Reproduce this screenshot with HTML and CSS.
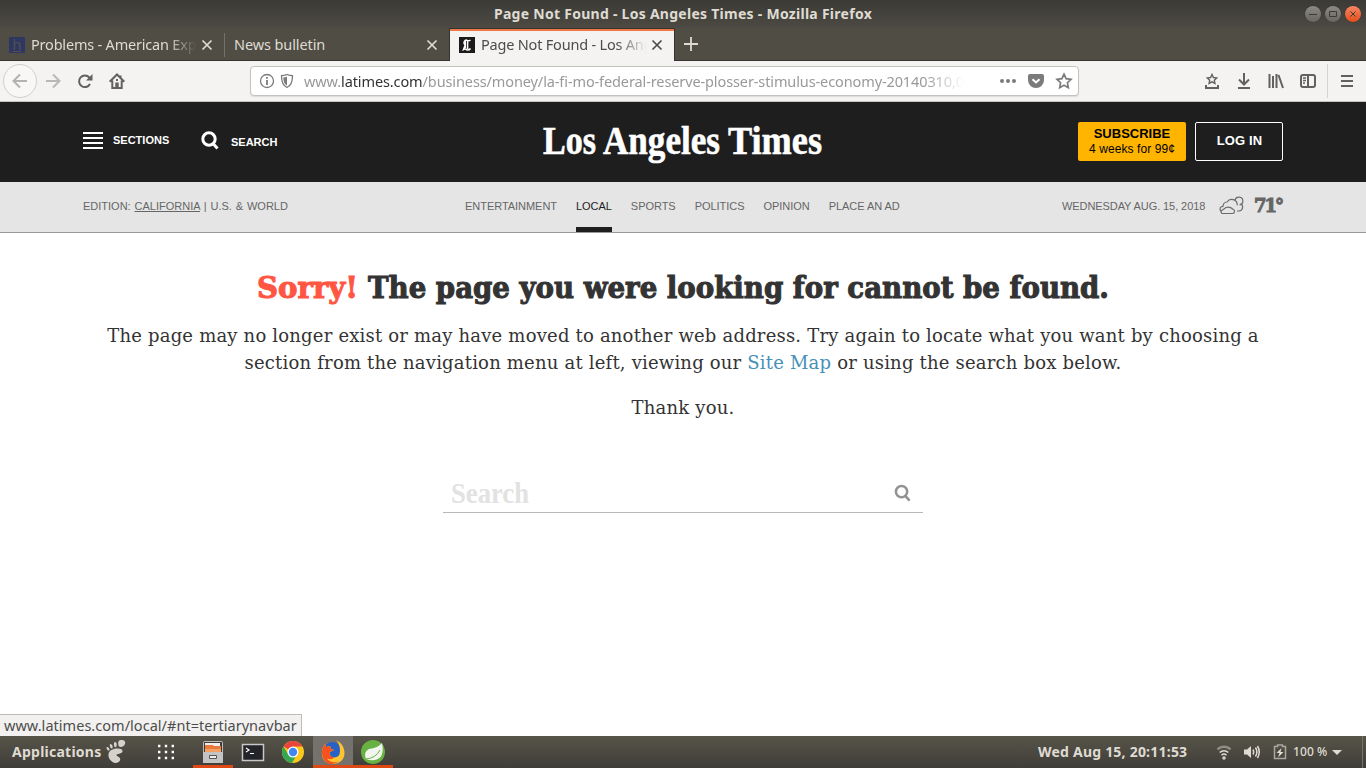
FILE: index.html
```html
<!DOCTYPE html>
<html lang="en">
<head>
<meta charset="utf-8">
<title>Page Not Found - Los Angeles Times</title>
<link rel="stylesheet" href="styles.css">
</head>
<body>
<div class="titlebar">
  <span class="window-title">Page Not Found - Los Angeles Times - Mozilla Firefox</span>
  <div class="window-buttons">
    <span class="win-btn"><svg viewBox="0 0 16 16"><path d="M4 8.500h8"/></svg></span>
    <span class="win-btn"><svg viewBox="0 0 16 16"><path d="M4.500 5.500h7v5h-7z"/></svg></span>
    <span class="win-btn win-close"><svg viewBox="0 0 16 16"><path d="M5.500 5.500l5 5m0-5l-5 5"/></svg></span>
  </div>
</div>
<div class="tabs">
  <div class="tab tab-first"><span class="favicon-h">h</span><span class="tab-label fade-dark">Problems - American Exp</span><svg class="close" viewBox="0 0 10 10"><path d="M.5.5l9 9m0-9l-9 9"/></svg></div>
  <div class="tab tab-second"><span class="tab-label">News bulletin</span><svg class="close" viewBox="0 0 10 10"><path d="M.5.5l9 9m0-9l-9 9"/></svg></div>
  <div class="tab tab-active"><svg class="favicon-la" viewBox="0 0 16 16"><path d="M0 0h16v16H0z" fill="#1d1a1b"/><path d="M11.500 3.200Q9 4.500 7.500 3 5 3.500 5 6.200L6.200 8 4.500 12.500Q6.500 11.500 8 13 10.500 13.200 11.500 11.500M5.200 3.400L6.300 4.500V11M8.600 4V12" fill="none" stroke="#fff" stroke-width="1.500"/></svg><span class="tab-label fade-light">Page Not Found - Los Ang</span><svg class="close" viewBox="0 0 10 10"><path d="M.5.5l9 9m0-9l-9 9"/></svg></div>
  <svg class="plus" viewBox="0 0 14 14"><path d="M7 0v14M0 7h14"/></svg>
</div>
<div class="toolbar">
  <span class="back"><svg viewBox="0 0 16 16"><path d="M15 8H2M8 1.500L1.500 8 8 14.500"/></svg></span>
  <svg class="icon forward" viewBox="0 0 16 16"><path d="M1 8h13M8 1.500L14.500 8 8 14.500"/></svg>
  <svg class="icon reload" viewBox="0 0 16 16"><path d="M12.300 4.500A5.800 5.800 0 1 0 13 11"/><path class="solid" d="M15.500 1v6.500H9z"/></svg>
  <svg class="icon home" viewBox="0 0 16 16"><path d="M.7 8.700L8 1.500l7.300 7.200M3.300 7.500v7.500h9.400V7.500M11.500 2.500v3"/><path class="solid" d="M6.300 9.500h3.400V15H6.300zM7 6h2v2H7z"/></svg>
  <div class="urlbar">
    <svg class="icon info" viewBox="0 0 16 16"><circle cx="8" cy="8" r="6.500"/><path class="thick" d="M8 7v5M8 4v1.700"/></svg>
    <svg class="icon shield" viewBox="0 0 16 16"><path d="M8 1.500Q11 2.700 13.500 2.700C13.500 9 12.500 12.500 8 14.500 3.500 12.500 2.500 9 2.500 2.700 5 2.700 8 1.500 8 1.500z"/><path class="solid" d="M8 3.500v9C5 11 4.500 8 4.300 4.500Q6.500 4.400 8 3.500z"/></svg>
    <span class="url">www.<b>latimes.com</b>/business/money/la-fi-mo-federal-reserve-plosser-stimulus-economy-20140310,0</span>
    <svg class="icon dots" viewBox="0 0 16 16"><circle cx="2" cy="8" r="2"/><circle cx="8" cy="8" r="2"/><circle cx="14" cy="8" r="2"/></svg>
    <svg class="icon pocket" viewBox="0 0 16 16"><path class="solid" d="M2 1h12q2 0 2 2v4a8 8 0 0 1-16 0V3q0-2 2-2z"/><path class="check" d="M4.500 6.200L8 9.500l3.500-3.300"/></svg>
    <svg class="icon star" viewBox="0 0 16 16"><path d="M8 1.200l2.100 4.500 4.900.6-3.600 3.400.9 5L8 12.200 3.700 14.700l.9-5L1 6.300l4.900-.6z"/></svg>
  </div>
  <div class="tools">
    <svg class="icon" viewBox="0 0 16 16"><path d="M2 12v3h12v-3"/><path class="thin" d="M8 1.500l1.400 3 3.300.4-2.400 2.300.6 3.200L8 8.900l-2.900 1.500.6-3.200-2.400-2.300 3.300-.4z"/></svg>
    <svg class="icon" viewBox="0 0 16 16"><path d="M8 0v11M3 6.500l5 5 5-5M2 15h12"/></svg>
    <svg class="icon" viewBox="0 0 16 16"><path d="M1.500 1v14M5 3v12M8.500 1v14M10.500 2l4.500 13"/></svg>
    <svg class="icon" viewBox="0 0 16 16"><rect x="1" y="2" width="14" height="12" rx="2"/><path d="M8 2v12"/><path class="thin" d="M3 5h3M3 7.500h3M3 10h2"/></svg>
  </div>
  <svg class="icon menu" viewBox="0 0 16 16"><path d="M2 3h12M2 8h12M2 13h12"/></svg>
</div>
<header class="masthead">
  <div class="burger"><i></i><i></i><i></i><i></i></div>
  <span class="mast-link">SECTIONS</span>
  <svg class="mast-search" viewBox="0 0 18 19"><circle cx="8" cy="8" r="6.200"/><path d="M12 12.500l4.500 5"/></svg>
  <span class="mast-link search-link">SEARCH</span>
  <svg class="logo" viewBox="0 0 280 44"><text y="34"><tspan x="0" textLength="53" lengthAdjust="spacingAndGlyphs">Los</tspan> <tspan x="60" textLength="117" lengthAdjust="spacingAndGlyphs">Angeles</tspan> <tspan x="185" textLength="94" lengthAdjust="spacingAndGlyphs">Times</tspan></text></svg>
  <div class="subscribe"><b>SUBSCRIBE</b><span>4 weeks for 99¢</span></div>
  <div class="login">LOG IN</div>
</header>
<nav class="subnav">
  <div class="edition">EDITION: <u>CALIFORNIA</u> | U.S. &amp; WORLD</div>
  <div class="links"><span>ENTERTAINMENT</span><span class="current">LOCAL</span><span>SPORTS</span><span>POLITICS</span><span>OPINION</span><span>PLACE AN AD</span></div>
  <span class="date">WEDNESDAY AUG. 15, 2018</span>
  <svg class="weather" viewBox="0 0 26 18"><path d="M1.500 14Q0 9.500 4 9.300A4.500 4.500 0 0 1 8 5a5.600 5.600 0 0 1 10.300 3.200M18 14h2a4 4 0 0 0 1.500-7.500M16 3a4 4 0 1 1 4.500 5M3.500 16.500h10a2.200 2.200 0 0 0 .5-4.300Q10.500 9 7 10.500L2 14q0 2.500 1.500 2.500"/></svg>
  <span class="temp">71°</span>
</nav>
<main class="page">
  <h1><svg viewBox="0 0 854 44"><text class="sorry" x="1" y="32" textLength="101" lengthAdjust="spacingAndGlyphs">Sorry!</text><text x="112" y="32" textLength="741" lengthAdjust="spacingAndGlyphs">The page you were looking for cannot be found.</text></svg></h1>
  <p>The page may no longer exist or may have moved to another web address. Try again to locate what you want by choosing a<br>section from the navigation menu at left, viewing our <a>Site Map</a> or using the search box below.</p>
  <p class="thanks">Thank you.</p>
  <div class="searchbox"><svg class="placeholder" viewBox="0 0 80 34"><text x="0" y="26" textLength="78" lengthAdjust="spacingAndGlyphs">Search</text></svg><svg class="search-icon" viewBox="0 0 18 19"><circle cx="8" cy="8" r="6"/><path d="M12 12.500l4.500 5"/></svg></div>
  <div class="status">www.latimes.com/local/#nt=tertiarynavbar</div>
</main>
<footer class="taskbar">
  <span class="apps">Applications</span>
  <svg class="foot" viewBox="0 0 20 24"><path d="M14.500 0c3-.5 5.500 1 4.500 4s-6 4-6.500 1.500S12 .5 14.500 0zM9 2c2.200 0 2.300 4.500.7 5.200C8 7.700 7 2.500 9 2zM4.500 4C6.500 4 7.500 8 6 8.500S2.800 4.500 4.500 4zM1 7c1.700-.5 3.300 2.800 2.200 3.600S-.8 7.700 1 7zM10 8.500c4-.5 7 .5 6.500 3s-6 2-6 3.500 4 1.500 3.700 4.500S9.500 24 6.500 22 2 17 2.500 14 6 9 10 8.500z"/></svg>
  <svg class="grid" viewBox="0 0 16 16"><path d="M0 2h16M0 8h16M0 14h16"/></svg>
  <div class="task running files"><svg viewBox="0 0 24 24"><rect x="2" y="1" width="20" height="22" rx="2" fill="#bbb"/><path d="M3 2h18v10H3z" fill="#443b36"/><path d="M4 3h15v3H4z" fill="#eee"/><path d="M4 5h8l1 1h7v6H4z" fill="#e9793c"/><path d="M4 9h16v3H4z" fill="#f5a163"/><path d="M2 12h20v11H2z" fill="#c4c4c4"/><path d="M8.500 15.500h7v3h-7z" fill="#eee" stroke="#555"/></svg></div>
  <div class="task"><svg viewBox="0 0 24 24"><path d="M1.500 4.500h21v16h-21z" fill="#24252a" stroke="#c8c8c8" stroke-width="1.500"/><path d="M5 8l3 2-3 2M9 13.500h4" fill="none" stroke="#fff" stroke-width="1.200"/></svg></div>
  <div class="task"><svg viewBox="0 0 24 24"><circle cx="12" cy="12" r="11" fill="#fbc71b"/><path d="M12 12L2.500 6.500A11 11 0 0 1 21.500 6.500H12z" fill="#e8453c"/><path d="M2.500 6.500A11 11 0 0 0 11 23l5-8.500-4-2.500-5 2z" fill="#33a852"/><circle cx="12" cy="12" r="5.500" fill="#fff"/><circle cx="12" cy="12" r="4.200" fill="#4285f4"/></svg></div>
  <div class="task running focused"><svg viewBox="0 0 24 24"><circle cx="11.500" cy="10.500" r="8.500" fill="#2862c4"/><path d="M15 0q6 3 7.500 8C26 17 20 24 12 24 4 24 0 18 1 11q.3-4 3-7l1 3 4-1 1 3 3 1-4 2q-1 5 4 5.500 6 0 6-6.500Q19 4 15 0z" fill="#ffc42e"/><path d="M4 4l1 3 4-1 1 3 3 1-4 2q-1 5 4 5.500-2 3-7 1 4 5.500 12 3-5 3-9 2.500C2 22 .5 15 1 11q.3-4 3-7z" fill="#f5521f"/></svg></div>
  <div class="task running"><svg viewBox="0 0 24 24"><circle cx="12" cy="12" r="12" fill="#68b243"/><path d="M21 3q3 15-7 17-5 1-9-1-3-7 3-10 9-1 13-6z" fill="#f1f5ed"/><path d="M5 19q10-1 14-9" fill="none" stroke="#68b243"/></svg></div>
  <span class="clock">Wed Aug 15, 20:11:53</span>
  <svg class="tray wifi" viewBox="0 0 16 16"><path d="M1.500 5.500a9 9 0 0 1 13 0" opacity=".45" stroke-width="2.500"/><path d="M3.700 8.500a6.200 6.200 0 0 1 8.600 0M5.500 11.200a3.700 3.700 0 0 1 5 0"/><circle cx="8" cy="14" r="1"/></svg>
  <svg class="tray sound" viewBox="0 0 16 16"><path class="solid" d="M0 5.500h3L7 2v12l-4-3.500H0z"/><path d="M9 5.500q1.500 2.500 0 5M11.500 3.500q2.800 4.500 0 9M13.500 2q3.500 6 0 12"/></svg>
  <svg class="tray battery" viewBox="0 0 14 18"><path d="M4.500 2h5v1.500h3v12h-11v-12h3z"/><path class="solid" d="M8.500 5L3.500 10h3L5 14.500 10.500 9h-3z"/></svg>
  <span class="percent">100 %</span>
  <i class="caret"></i>
  <i class="edge"></i>
</footer>
</body>
</html>
```
FILE: styles.css
```css
* { box-sizing: border-box; }
body { margin: 0; width: 1366px; height: 768px; overflow: hidden; display: flex; flex-direction: column; background: #fff; font-family: "Noto Sans", sans-serif; }
svg { display: block; flex: none; overflow: visible; }
span { white-space: nowrap; }
.titlebar { height: 28px; flex: none; display: flex; align-items: center; position: relative; justify-content: center; background: linear-gradient(#3b3a36, #4d4a43); }
.window-title { color: #dfdbd2; font-weight: bold; font-size: 14px; letter-spacing: .27px; padding-bottom: 2px; }
.window-buttons { position: absolute; right: 5px; top: 6px; display: flex; gap: 4px; }
.win-btn { width: 16px; height: 16px; border-radius: 50%; background: linear-gradient(#8c8a83, #67655f); box-shadow: 0 0 1px #222; }
.win-btn path { fill: none; stroke: #3c3b37; }
.win-close { background: linear-gradient(#f58663, #e44e1b); }
.tabs { height: 33px; flex: none; display: flex; background: #504d45; border-bottom: 1px solid #36342f; }
.tab { display: flex; align-items: center; color: #dfdbd2; font-size: 14.500px; height: 33px; }
.tab-first { width: 224px; padding-left: 9px; }
.tab-second { width: 225px; padding-left: 10px; position: relative; }
.tab-second::before { content: ""; position: absolute; left: 0; top: 5px; height: 24px; width: 1px; background: #74716a; }
.tab-active { width: 226px; padding-left: 9px; background: #f4f3f2; color: #4c4c4c; border: 1px solid #36342f; border-width: 1px 1px 0; box-shadow: inset 0 2px #f07746; }
.tab-label { width: 166px; letter-spacing: -.2px; padding-bottom: 2px; }
.tab-second .tab-label { width: 188px; letter-spacing: -.1px; }
.fade-dark, .fade-light { -webkit-mask: linear-gradient(90deg, #000 82%, transparent); mask: linear-gradient(90deg, #000 82%, transparent); }
.favicon-h { width: 16px; height: 16px; margin-right: 6px; background: #2d3761; color: #554f4f; font-size: 15px; line-height: 15px; text-align: center; text-decoration: underline; border-radius: 1px; }
.favicon-la { width: 16px; height: 16px; margin-right: 6px; }
.close { width: 10px; height: 10px; margin-left: 5px; stroke: currentColor; stroke-width: 1.700; fill: none; }
.plus { width: 14px; height: 14px; margin: 9px 0 0 9px; stroke: #dfdbd2; stroke-width: 1.800; }
.toolbar { height: 41px; flex: none; background: #f4f3f2; border-bottom: 1px solid #c6c4c1; display: flex; align-items: center; padding-left: 3px; }
.icon { width: 16px; height: 16px; fill: none; stroke: #62615f; stroke-width: 2; }
.solid { fill: #62615f; stroke: none; }
.thin { stroke-width: 1.400; }
.back { width: 34px; height: 34px; border: 1px solid #d0cfcd; border-radius: 50%; padding: 8px; background: #f8f7f6; }
.back svg { width: 16px; height: 16px; fill: none; stroke: #b3b2b0; stroke-width: 2; }
.forward { margin-left: 8px; stroke: #b9b8b6; }
.reload { margin-left: 16px; }
.home { margin-left: 16px; }
.urlbar { width: 829px; height: 30px; margin-left: 125px; border: 1px solid #c4c2be; border-radius: 4px; background: #fff; display: flex; align-items: center; padding-left: 8px; box-shadow: 0 1px 1px #dddcda; }
.urlbar .icon { stroke: #7b7b7b; stroke-width: 1.300; }
.info .thick { stroke-width: 1.800; }
.shield { margin-left: 4px; }
.shield .solid { fill: #7b7b7b; }
.url { width: 660px; margin-left: 9px; font-size: 14.500px; color: #999; letter-spacing: -.11px; -webkit-mask: linear-gradient(90deg, #000 94%, transparent); mask: linear-gradient(90deg, #000 94%, transparent); }
.url b { font-weight: normal; color: #333; }
.urlbar .dots { margin-left: 36px; fill: #7b7b7b; stroke: none; }
.pocket { margin-left: 12px; }
.pocket .solid { fill: #7b7b7b; }
.urlbar .check { stroke: #fff; stroke-width: 2; }
.urlbar .star { margin-left: 12px; stroke-width: 1.700; }
.tools { display: flex; gap: 16px; width: 249px; padding-left: 125px; height: 34px; align-items: center; border-right: 1px solid #d6d4d1; }
.menu { margin-left: 11px; }
.masthead { height: 80px; flex: none; background: #1e1e1e; color: #fff; padding-left: 83px; display: flex; align-items: flex-start; font-family: "Liberation Sans", sans-serif; }
.burger { display: flex; flex-direction: column; gap: 3px; width: 20px; margin-top: 30px; }
.burger i { height: 2px; background: #fff; }
.mast-link { width: 57px; margin: 32px 0 0 10px; font-size: 11px; line-height: 13px; font-weight: bold; }
.mast-search { width: 18px; height: 19px; margin: 29px 0 0 31px; fill: none; stroke: #fff; stroke-width: 3; }
.search-link { margin: 34px 0 0 12px; }
.logo { width: 280px; height: 44px; margin: 18px 0 0 255px; }
.logo text { fill: #fff; stroke: #fff; stroke-width: .6; font: bold 41px "Liberation Serif", serif; }
.subscribe { width: 108px; height: 39px; margin: 20px 0 0 255px; padding-top: 4px; background: #ffb400; border-radius: 2px; color: #000; text-align: center; display: flex; flex-direction: column; font-size: 12px; line-height: 15px; }
.subscribe span { padding-top: 1px; letter-spacing: .07px; }
.subscribe b { font-size: 13px; }
.login { width: 88px; height: 39px; margin: 20px 0 0 9px; border: 1px solid #fff; border-radius: 2px; font-size: 13px; font-weight: bold; line-height: 36px; text-align: center; padding-left: 1px; letter-spacing: .1px; }
.subnav { height: 51px; flex: none; background: #e5e5e5; border-bottom: 1px solid #999; padding-left: 83px; display: flex; font: 11px/48px "Liberation Sans", sans-serif; color: #666; }
.edition { width: 382px; word-spacing: .8px; }
.edition u { text-underline-offset: 1px; }
.links { display: flex; gap: 19px; width: 597px; letter-spacing: -.04px; }
.current { color: #1e1e1e; height: 50px; border-bottom: 5px solid #1e1e1e; }
.date { width: 144px; letter-spacing: -.08px; }
.weather { width: 26px; height: 18px; margin: 15px 0 0 13px; fill: none; stroke: #6c6c6c; stroke-width: 1.200; }
.temp { margin-left: 9px; font: bold 18px/48px "DejaVu Serif", serif; letter-spacing: -2px; -webkit-text-stroke: 1px #666; }
.page { flex: 1; position: relative; display: flex; flex-direction: column; align-items: center; color: #333; font: 18px/27px "DejaVu Serif", serif; }
h1 { margin: 33px 0 0; height: 44px; }
h1 svg { width: 854px; height: 44px; }
h1 text { font: bold 30.500px "DejaVu Serif", serif; fill: #333; stroke: #333; stroke-width: 1.100; }
h1 .sorry { fill: #ff5643; stroke: #ff5643; }
p { margin: 12px 0 0; text-align: center; white-space: nowrap; letter-spacing: .195px; }
p a { color: #4591b8; }
.thanks { margin-top: 18px; }
.searchbox { width: 480px; height: 40px; margin-top: 52px; border-bottom: 1px solid #b8b8b8; display: flex; justify-content: space-between; padding: 0 12px 0 8px; }
.placeholder { width: 80px; height: 34px; margin-top: 4px; }
.placeholder text { fill: #e2e2e2; font: bold 30px "Liberation Serif", serif; }
.search-icon { width: 17px; height: 18px; margin-top: 11px; fill: none; stroke: #929292; stroke-width: 2.700; }
.status { position: absolute; left: 0; bottom: 0; width: 302px; height: 22px; border: 1px solid #bdbbb8; border-width: 1px 1px 0 0; background: #f2f1f0; color: #4c4c4c; padding-left: 4px; font: 14.500px/20px "Noto Sans", sans-serif; letter-spacing: .03px; white-space: nowrap; }
.taskbar { height: 32px; flex: none; display: flex; align-items: center; background: linear-gradient(#575449, #3f3d38); color: #dfdbd2; font-size: 14px; font-weight: bold; }
.apps { width: 93px; margin-left: 12px; letter-spacing: .25px; padding-bottom: 2px; }
.foot { width: 20px; height: 24px; fill: #d5d2cc; margin-left: 1px; }
.grid { width: 16px; height: 16px; margin: 0 19px 0 32px; stroke: #fff; stroke-width: 2.400; stroke-dasharray: 2.400 4.400; }
.task { width: 40px; height: 32px; padding: 4px 8px; }
.task svg { width: 24px; height: 24px; }
.running { border-bottom: 3px solid #dd4814; }
.focused { background: #75726d; }
.clock { width: 150px; margin-left: 645px; padding-bottom: 2px; letter-spacing: .22px; }
.tray { width: 16px; height: 16px; fill: none; stroke: #dfdbd2; stroke-width: 1.500; }
.tray .solid { fill: #dfdbd2; }
.wifi { margin-left: 28px; }
.sound { margin-left: 12px; }
.battery { width: 14px; height: 18px; margin-left: 13px; }
.tray.battery { width: 14px; height: 18px; stroke: #aaa79f; }
.percent { width: 35px; margin-left: 6px; font-size: 12px; font-weight: 500; letter-spacing: .1px; padding-bottom: 1px; }
.caret { border: 5px solid transparent; border-top-color: #dfdbd2; border-bottom: 0; margin-left: 4px; }
.edge { width: 1px; height: 32px; background: #76736a; margin-left: 20px; }
```
